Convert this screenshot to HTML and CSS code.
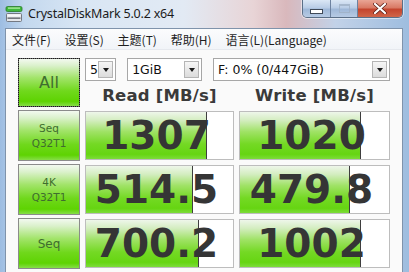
FILE: index.html
```html
<!DOCTYPE html>
<html lang="zh">
<head>
<meta charset="utf-8">
<title>CrystalDiskMark 5.0.2 x64</title>
<link rel="stylesheet" href="styles.css">
</head>
<body>
<div class="window">
  <div class="titlebar">
    <svg class="appicon" width="18" height="18" viewBox="0 0 18 18">
      <rect x="1" y="1.5" width="16" height="5" rx="1.5" fill="#3fb83c" stroke="#2a7a2a" stroke-width="0.8"/>
      <rect x="3" y="2.5" width="12" height="1.2" fill="#b9f0a8"/>
      <rect x="1.5" y="8.5" width="15" height="8" rx="1" fill="#e4e6ea" stroke="#6a6e76" stroke-width="0.9"/>
      <rect x="2.5" y="12.5" width="13" height="1.3" fill="#5a5e66"/>
      <rect x="2.5" y="9.5" width="13" height="2" fill="#f7f8fa"/>
    </svg>
    <span class="title">CrystalDiskMark 5.0.2 x64</span>
    <div class="caption">
      <div class="cbtn cmin"><span class="min-ico"></span></div>
      <div class="cbtn cmax"><span class="max-ico"></span></div>
      <div class="cbtn cclose">
        <svg width="14" height="11" viewBox="0 0 14 11"><path d="M2 1 L12 10 M12 1 L2 10" stroke="#5a2018" stroke-width="3.6" stroke-linecap="round"/><path d="M2 1 L12 10 M12 1 L2 10" stroke="#ffffff" stroke-width="2.2" stroke-linecap="round"/></svg>
      </div>
    </div>
  </div>
  <div class="frame">
    <div class="menubar">
      <span class="mi">文件(F)</span>
      <span class="mi">设置(S)</span>
      <span class="mi">主题(T)</span>
      <span class="mi">帮助(H)</span>
      <span class="mi">语言(L)(Language)</span>
    </div>
    <div class="client">
      <div class="btn btn-all">All</div>
      <div class="combos">
        <div class="combo c1"><span class="ctext">5</span><span class="arrow"></span></div>
        <div class="combo c2"><span class="ctext">1GiB</span><span class="arrow"></span></div>
        <div class="combo c3"><span class="ctext">F: 0% (0/447GiB)</span><span class="arrow"></span></div>
      </div>
      <div class="head">Read [MB/s]</div>
      <div class="head">Write [MB/s]</div>

      <div class="btn btn-small">Seq<br>Q32T1</div>
      <div class="result"><div class="bar" style="width:82%"></div><div class="val">1307</div></div>
      <div class="result"><div class="bar" style="width:81%"></div><div class="val">1020</div></div>

      <div class="btn btn-small">4K<br>Q32T1</div>
      <div class="result"><div class="bar" style="width:73%"></div><div class="val">514.5</div></div>
      <div class="result"><div class="bar" style="width:74%"></div><div class="val">479.8</div></div>

      <div class="btn btn-seq">Seq</div>
      <div class="result"><div class="bar" style="width:77%"></div><div class="val">700.2</div></div>
      <div class="result"><div class="bar" style="width:81%"></div><div class="val">1002</div></div>
    </div>
  </div>
</div>
</body>
</html>
```
FILE: styles.css
```css
html, body {
  margin: 0;
  padding: 0;
  background: #ffffff;
}
.window {
  width: 409px;
  height: 272px;
  overflow: hidden;
  display: flex;
  flex-direction: column;
  background: linear-gradient(90deg, #9dbde2 0%, #c3d8ee 6%, #d9e6f4 20%, #e2eaf4 45%, #e8d4d6 62%, #d9b8bc 70%, #c2d2e8 82%, #9ebddf 100%);
}
.titlebar {
  height: 28px;
  flex: none;
  display: flex;
  align-items: flex-start;
}
.appicon {
  margin: 5px 0 0 5px;
  flex: none;
}
.title {
  margin: 5px 0 0 5px;
  font-family: "Noto Sans", "Open Sans", sans-serif;
  font-size: 12.5px;
  letter-spacing: -0.2px;
  line-height: 18px;
  color: #1b1b1b;
  white-space: nowrap;
}
.caption {
  margin-left: auto;
  margin-right: 6px;
  display: flex;
  height: 17px;
  border: 1px solid #5b6f87;
  border-top: none;
  border-radius: 0 0 5px 5px;
  overflow: hidden;
  box-shadow: 0 0 0 1px rgba(255,255,255,0.5);
}
.cbtn {
  height: 17px;
  display: flex;
  align-items: center;
  justify-content: center;
}
.cmin {
  width: 27px;
  border-right: 1px solid #6d82a0;
  background: linear-gradient(#dbe7f5 0%, #b9cde6 45%, #9fb8d8 55%, #b7cbe4 100%);
}
.cmax {
  width: 26px;
  border-right: 1px solid #6d82a0;
  background: linear-gradient(#dbe7f5 0%, #b9cde6 45%, #9fb8d8 55%, #b7cbe4 100%);
}
.cclose {
  width: 44px;
  background: linear-gradient(#e9a595 0%, #d97a65 45%, #c4452e 55%, #d0664a 100%);
}
.min-ico {
  width: 11px;
  height: 3px;
  margin-top: 5px;
  background: #ffffff;
  border: 1px solid #404a58;
}
.max-ico {
  width: 9px;
  height: 6px;
  border: 1px solid #9fb0c6;
  border-top-width: 2px;
  opacity: 0.8;
}
.frame {
  flex: 1;
  display: flex;
  flex-direction: column;
  margin: 0 6px 0 5px;
  border: 1px solid #7f93ab;
  border-bottom: none;
  background: #fafafa;
}
.menubar {
  height: 20px;
  flex: none;
  display: flex;
  align-items: center;
  gap: 13.8px;
  padding-left: 6px;
  background: linear-gradient(#fbfcfd, #f1f4f8);
  border-bottom: 1px solid #e6e9ee;
  font-family: "Noto Sans CJK SC", "Noto Sans", sans-serif;
  font-size: 12px;
  color: #1e1e1e;
}
.mi {
  white-space: nowrap;
}
.client {
  flex: 1;
  display: grid;
  grid-template-columns: 62px 149px 151px;
  grid-template-rows: 23px 23px 51px 51px 51px;
  column-gap: 5px;
  row-gap: 3px;
  padding: 8px 0 0 12px;
  background: #fafafa;
}
.btn {
  display: flex;
  align-items: center;
  justify-content: center;
  text-align: center;
  border: 1px solid #8b8b8b;
  background: linear-gradient(#f3f9f0 0%, #dbf1cc 14%, #a2e46a 40%, #70d81c 68%, #5ed302 90%, #86de48 100%);
  font-family: "DejaVu Sans", sans-serif;
  color: #3f6d2f;
}
.btn-all {
  grid-row: 1 / 3;
  font-size: 16px;
  outline: 1px dotted #1a1a1a;
  outline-offset: -1px;
  border-color: #6c6c6c;
}
.btn-small {
  font-size: 10.5px;
  line-height: 15px;
}
.btn-seq {
  font-size: 12px;
}
.combos {
  grid-column: 2 / 4;
  display: flex;
  gap: 11px;
}
.combo {
  display: flex;
  align-items: stretch;
  background: #ffffff;
  border: 1px solid #a7a7a7;
  font-family: "DejaVu Sans", sans-serif;
  font-size: 12.5px;
  color: #111;
}
.c1 { width: 30px; }
.c2 { width: 75px; }
.c3 { width: 180px; }
.ctext {
  flex: 1;
  padding-left: 4px;
  line-height: 21px;
  white-space: nowrap;
  overflow: hidden;
}
.arrow {
  width: 13px;
  margin: 2px 2px 2px 0;
  border: 1px solid #b5b5b5;
  background: linear-gradient(#f6f6f6, #dcdcdc);
  display: flex;
  align-items: center;
  justify-content: center;
}
.arrow::after {
  content: "";
  border-left: 3px solid transparent;
  border-right: 3px solid transparent;
  border-top: 4px solid #1a1a1a;
}
.head {
  display: flex;
  align-items: center;
  justify-content: center;
  font-family: "DejaVu Sans", sans-serif;
  font-weight: bold;
  font-size: 16.5px;
  color: #3a3a3a;
  letter-spacing: 0.2px;
}
.result {
  display: grid;
  margin: 1px 0;
  border: 1px solid #bdbdbd;
  background: #ffffff;
}
.bar, .val {
  grid-area: 1 / 1;
}
.bar {
  box-sizing: border-box;
  border-right: 1px solid #3e3e3e;
  background: linear-gradient(#eef6ea 0%, #d3edbf 18%, #9fe265 42%, #74d924 68%, #66d512 90%, #7ddc3a 100%);
}
.val {
  display: flex;
  align-items: center;
  justify-content: center;
  padding-right: 6px;
  font-family: "DejaVu Sans", sans-serif;
  font-weight: bold;
  font-size: 39px;
  color: #353535;
}
```
